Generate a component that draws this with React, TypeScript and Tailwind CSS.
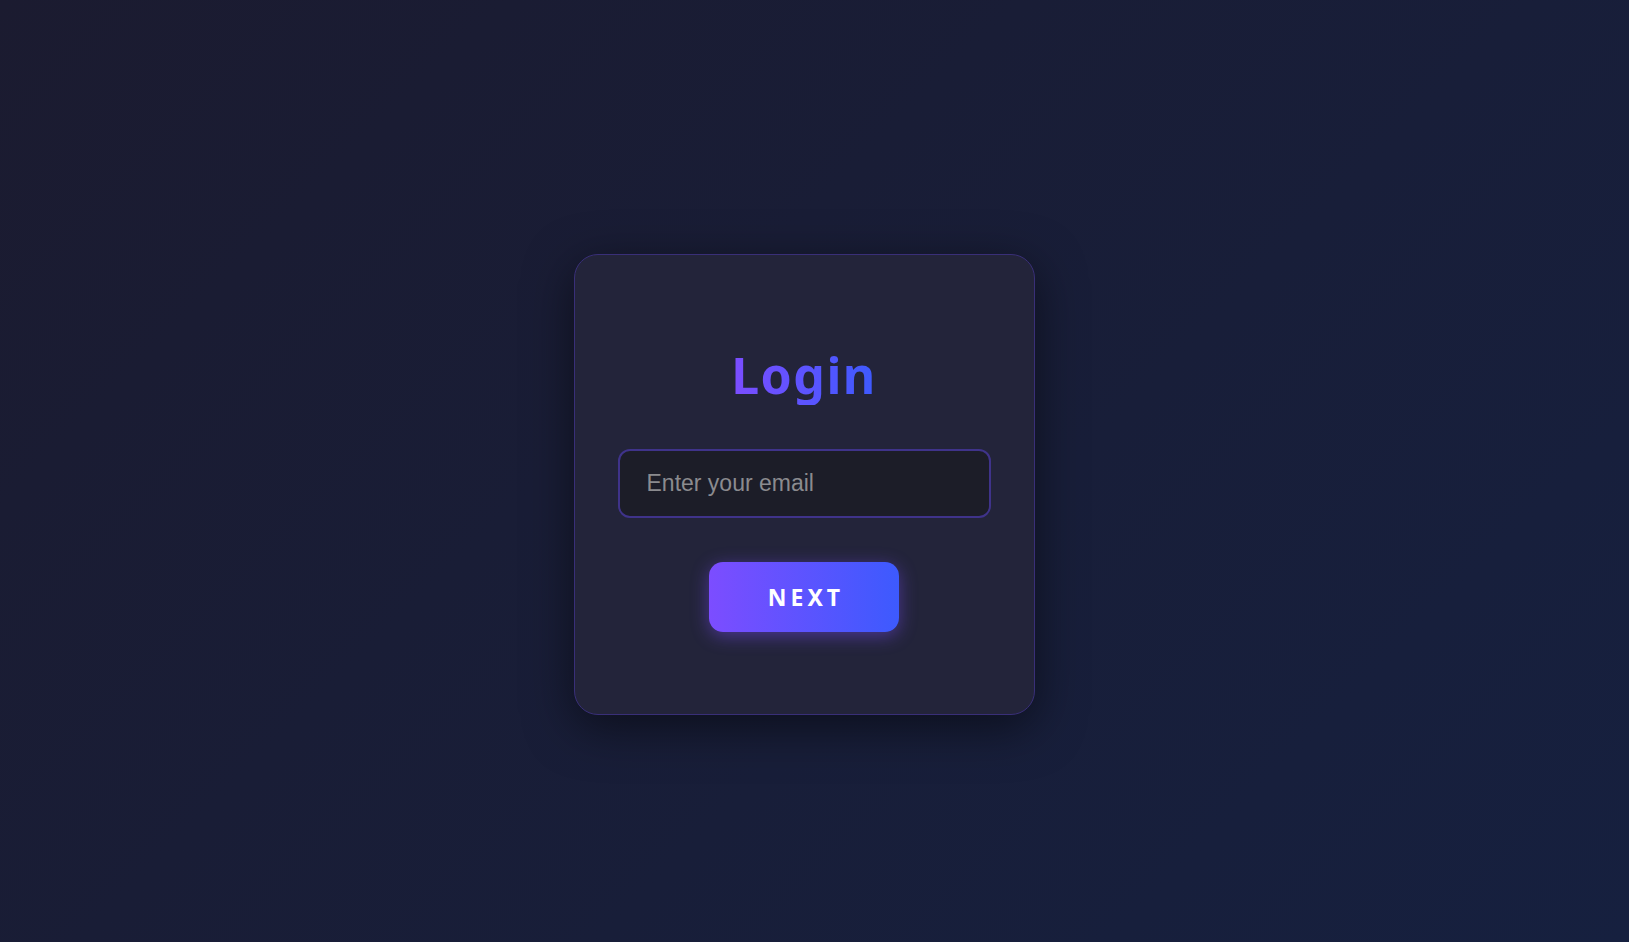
import React from "react";

export default function App() {
  return (
    <div className="min-h-screen w-full flex items-center justify-center bg-[linear-gradient(135deg,#1b1b30_0%,#16203f_100%)] pr-[21px] pt-[27px]">
      <div className="w-[461px] h-[461px] rounded-[24px] border border-[#392f78] bg-[#23243a] shadow-[0_12px_48px_rgba(0,0,0,0.5)] px-[43px] pt-[90px] flex flex-col items-center">
        <h1 className="font-['Noto_Sans',sans-serif] font-bold text-[50px] leading-[1.2] tracking-[1.5px] bg-[linear-gradient(90deg,#7c4dff,#3d5afe)] bg-clip-text text-transparent">
          Login
        </h1>
        <input
          type="email"
          placeholder="Enter your email"
          className="mt-[44px] w-full h-[69px] rounded-[12px] border-2 border-[#3f338a] bg-[#1c1d28] px-[27px] font-['Liberation_Sans',Arial,sans-serif] text-[23px] text-white placeholder:text-[#8b8b8f] outline-none"
        />
        <button className="mt-[44px] w-[190px] h-[70px] rounded-[14px] bg-[linear-gradient(90deg,#7c4dff,#3d5afe)] shadow-[0_4px_18px_rgba(124,77,255,0.45)] font-['Noto_Sans',sans-serif] font-bold text-[23px] tracking-[4px] pl-[4px] text-white">
          NEXT
        </button>
      </div>
    </div>
  );
}
